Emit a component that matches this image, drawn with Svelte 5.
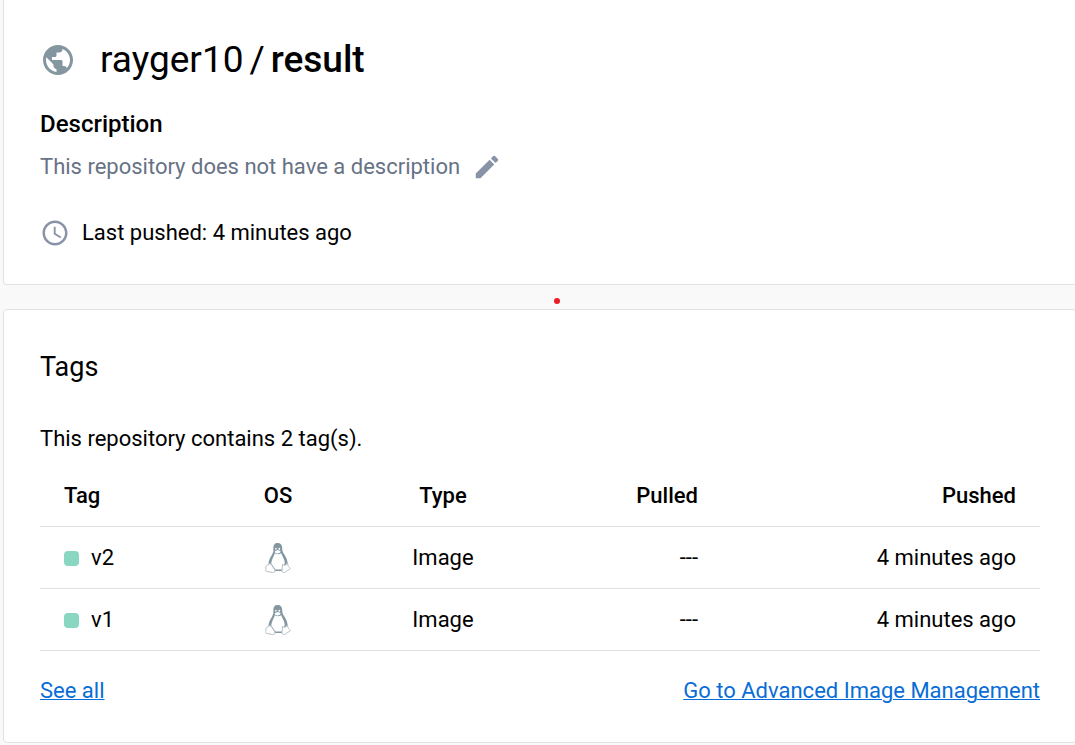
<script>
  const tags = [
    { name: 'v2', type: 'Image', pulled: '---', pushed: '4 minutes ago' },
    { name: 'v1', type: 'Image', pulled: '---', pushed: '4 minutes ago' }
  ];
</script>

<main>
  <section class="card summary">
    <header>
      <svg class="globe" viewBox="0 0 24 24" aria-hidden="true">
        <path d="M12 2C6.480 2 2 6.480 2 12s4.480 10 10 10 10-4.480 10-10S17.520 2 12 2zm-1 17.930c-3.950-.49-7-3.850-7-7.930 0-.62.080-1.210.210-1.790L9 15v1c0 1.100.9 2 2 2v1.930zm6.900-2.540c-.26-.81-1-1.390-1.900-1.390h-1v-3c0-.55-.45-1-1-1H8v-2h2c.55 0 1-.45 1-1V7h2c1.100 0 2-.9 2-2v-.41c2.930 1.190 5 4.060 5 7.410 0 2.080-.8 3.970-2.100 5.390z" />
      </svg>
      <h1>rayger10<span>/</span><strong>result</strong></h1>
    </header>
    <h2>Description</h2>
    <div class="description">
      <p>This repository does not have a description</p>
      <button type="button" aria-label="Edit description">
        <svg viewBox="0 0 24 24" aria-hidden="true">
          <path d="M3 17.250V21h3.750L17.810 9.940l-3.750-3.750L3 17.250zM20.710 7.040c.39-.39.39-1.020 0-1.410l-2.340-2.340a.9959.9959 0 0 0-1.410 0l-1.830 1.830 3.750 3.750 1.830-1.830z" />
        </svg>
      </button>
    </div>
    <div class="pushed-row">
      <svg viewBox="0 0 24 24" aria-hidden="true">
        <path d="M11.990 2C6.470 2 2 6.480 2 12s4.470 10 9.990 10C17.520 22 22 17.520 22 12S17.520 2 11.990 2zM12 20c-4.420 0-8-3.580-8-8s3.580-8 8-8 8 3.580 8 8-3.580 8-8 8zm.5-13H11v6l5.250 3.150.75-1.230-4.500-2.670z" />
      </svg>
      <p>Last pushed: 4 minutes ago</p>
    </div>
  </section>

  <span class="dot"></span>

  <section class="card">
    <h2 class="tags-title">Tags</h2>
    <p class="count">This repository contains 2 tag(s).</p>
    <table>
      <colgroup>
        <col class="c-tag" /><col class="c-os" /><col class="c-type" /><col class="c-pulled" /><col class="c-pushed" />
      </colgroup>
      <thead>
        <tr>
          <th>Tag</th>
          <th class="center">OS</th>
          <th class="center">Type</th>
          <th class="right">Pulled</th>
          <th class="right">Pushed</th>
        </tr>
      </thead>
      <tbody>
        {#each tags as tag}
          <tr>
            <td><div class="tag"><i></i>{tag.name}</div></td>
            <td>
              <svg class="penguin" viewBox="0 1 26 30" role="img" aria-label="Linux">
                <path class="body" d="M12.700 1C9.600 1 8.300 3.100 8.400 6c.1 3-.1 4.500-1.700 7.200-1.500 2.500-3 4.900-3.200 8.300L3.500 24l5 5h9L22.500 24c.7-4.300-1-8.200-3-11.200-1.700-2.400-2.300-3.800-2.300-6.500C17.200 3 15.800 1 12.700 1z" />
                <path class="white" d="M9.900 11.200c-.8 3-3.500 6.300-3.700 10.300l4.200 6h6.400l3-6.500c-.2-3.800-2.600-7-3.600-9.800-1.800 1.200-4.200 1.700-6.300 0z" />
                <ellipse class="white" cx="10.900" cy="6.800" rx=".8" ry="1" />
                <ellipse class="white" cx="14.300" cy="6.800" rx=".9" ry="1.100" />
                <path class="white" d="M9.800 9.200l2.700-1.300 3.100 1.200-.4 1.300-2.700 1.300-2.700-1.200z" />
                <path class="foot" d="M4.300 21.800c1.200-.4 2 .5 2.800 1.900l2.600 4c.9 1.800-.2 2.900-2.200 2.800L1.400 29.400c-1-.4-.7-1.400-.5-2.700.1-1.100-.5-2.400.5-2.800 1.300-.4 1.800-1.600 2.900-2.100z" />
                <path class="foot" d="M17.500 22.300c1.300 1.500 3 1.100 4.300-.6 1.400.2.9 1.800 1.700 2.800.6.9 1.800 1.300 1.700 2.100-.1.900-2.300 1.400-3.500 2.500-1.100 1.400-3.200 1.800-4.300.9-.9-1.200-.2-2.500-.1-4.200z" />
              </svg>
            </td>
            <td class="center">{tag.type}</td>
            <td class="right">{tag.pulled}</td>
            <td class="right">{tag.pushed}</td>
          </tr>
        {/each}
      </tbody>
    </table>
    <footer>
      <a href="#all">See all</a>
      <a href="#images">Go to Advanced Image Management</a>
    </footer>
  </section>
</main>

<style>
  :global(body) {
    margin: 0;
    background: #f9f9f9;
  }
  main {
    position: relative;
    display: flex;
    flex-direction: column;
    gap: 24px;
    padding: 0 0 2px 3px;
    overflow: hidden;
    color: #000;
    font: 400 22px/30px Roboto, sans-serif;
  }
  .card {
    margin-right: -2px;
    padding: 36px;
    background: #fff;
    border: 1px solid #e1e2e6;
    border-radius: 4px;
  }
  .summary {
    border-top: 0;
    border-radius: 0 0 4px 4px;
  }
  h1, h2, p {
    margin: 0;
  }
  header {
    display: flex;
    align-items: center;
    gap: 24px;
  }
  h1 {
    display: flex;
    gap: 6px;
    font-size: 37px;
    line-height: 48px;
    font-weight: 400;
  }
  h1 strong {
    font-weight: 500;
  }
  svg {
    display: block;
    flex: none;
  }
  .globe {
    width: 36px;
    height: 36px;
    fill: #8496a0;
  }
  h2 {
    margin-top: 24px;
    font-size: 24px;
    line-height: 32px;
    font-weight: 500;
  }
  .description {
    display: flex;
    align-items: center;
    gap: 12px;
    margin-top: 12px;
    color: #677285;
  }
  button {
    padding: 0;
    border: 0;
    background: none;
    cursor: pointer;
  }
  button svg, .pushed-row svg {
    width: 30px;
    height: 30px;
    fill: #8993a8;
  }
  .pushed-row {
    display: flex;
    align-items: center;
    gap: 12px;
    margin-top: 36px;
  }
  .dot {
    position: absolute;
    top: 298px;
    left: 554px;
    width: 6px;
    height: 6px;
    border-radius: 50%;
    background: #ec1c24;
  }
  .tags-title {
    margin-top: 0;
    font-size: 27px;
    line-height: 42px;
    font-weight: 400;
  }
  .count {
    margin-top: 36px;
  }
  table {
    width: 100%;
    margin-top: 12px;
    table-layout: fixed;
    border-collapse: separate;
    border-spacing: 0;
  }
  .c-tag { width: 17%; }
  .c-os { width: 13.6%; }
  .c-type { width: 19.4%; }
  .c-pulled { width: 18.2%; }
  .c-pushed { width: 31.8%; }
  th, td {
    padding: 16px 24px 15px;
    border-bottom: 1px solid #e0e0e0;
    text-align: left;
  }
  th {
    padding-top: 15px;
    font-weight: 500;
  }
  .center {
    text-align: center;
  }
  .right {
    text-align: right;
  }
  .tag {
    display: flex;
    align-items: center;
    gap: 12px;
  }
  .tag i {
    width: 15px;
    height: 15px;
    border-radius: 4px;
    background: #8ad7c1;
  }
  .penguin {
    width: 26px;
    height: 30px;
    margin: 0 auto;
  }
  .body {
    fill: #8496a0;
  }
  .white {
    fill: #fff;
  }
  .foot {
    fill: #fff;
    stroke: #b3bec4;
    stroke-width: 1;
  }
  footer {
    display: flex;
    justify-content: space-between;
    margin-top: 25px;
  }
  a {
    color: #086dd7;
    text-decoration: underline;
    text-decoration-thickness: 1px;
  }
</style>
